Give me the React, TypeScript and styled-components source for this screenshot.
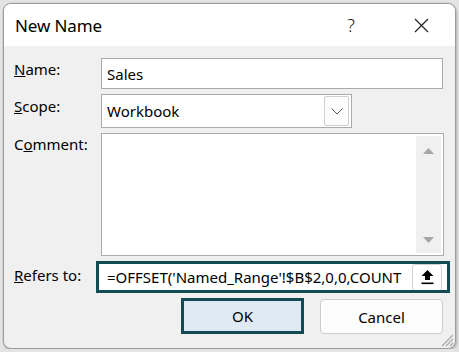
import React from "react";
import styled, { createGlobalStyle } from "styled-components";

const Global = createGlobalStyle`
  html, body { margin: 0; padding: 0; background: #e4e4e4; }
  body { font-family: "Noto Sans", "Open Sans", "Liberation Sans", sans-serif; color: #000; }
  * { box-sizing: border-box; }
`;

const Dialog = styled.div`
  margin: 3px 0 0 3px;
  width: 453px;
  height: 346px;
  border: 1px solid #9c9c9c;
  border-radius: 8px;
  background: #f0f0f0;
  box-shadow: 0 0 0 1px rgba(0,0,0,0.06), 1px 2px 3px rgba(0,0,0,0.18);
  overflow: hidden;
  display: flex;
  flex-direction: column;
  position: relative;
`;

const TitleBar = styled.div`
  height: 42px;
  background: #fff;
  display: flex;
  align-items: center;
  padding: 0 0 0 11px;
`;

const Title = styled.div`
  flex: 1;
  font-size: 17px;
  letter-spacing: -0.1px;
  padding-top: 1px;
`;

const TitleButton = styled.div<{ $w: number }>`
  width: ${p => p.$w}px;
  height: 42px;
  display: flex;
  align-items: center;
  justify-content: center;
  font-size: 18px;
  font-weight: 300;
  color: #222;
`;

const Body = styled.div`
  flex: 1;
  padding: 12px 10px 0 10px;
  display: grid;
  grid-template-columns: 87px 1fr;
  grid-template-rows: 31px 34px 123px 32px;
  row-gap: 5px;
`;

const Label = styled.div<{ $pt: number }>`
  font-size: 15px;
  line-height: 20px;
  padding-top: ${p => p.$pt}px;
  white-space: nowrap;
`;

const TextBox = styled.div<{ $w?: number }>`
  width: ${p => (p.$w ? `${p.$w}px` : "auto")};
  height: 100%;
  background: #fff;
  border: 1px solid #ababab;
  display: flex;
  align-items: center;
  padding-left: 5px;
  font-size: 15px;
  position: relative;
`;

const SelectBox = styled(TextBox)`
  padding-right: 2px;
  justify-content: space-between;
`;

const DropButton = styled.div`
  width: 25px;
  height: 30px;
  border: 1px solid #cfcfcf;
  border-radius: 2px;
  background: #fcfcfc;
  display: flex;
  align-items: center;
  justify-content: center;
`;

const CommentBox = styled.div`
  background: #fff;
  border: 1px solid #ababab;
  width: 343px;
  height: 123px;
  display: flex;
  justify-content: flex-end;
  padding: 2px 2px 2px 0;
`;

const ScrollBar = styled.div`
  width: 25px;
  height: 100%;
  background: #f0f0f0;
  display: flex;
  flex-direction: column;
  justify-content: space-between;
  align-items: center;
  padding: 12px 0 10px;
`;

const RefersBox = styled.div`
  margin-left: -5px;
  width: 354px;
  height: 32px;
  border: 3px solid #124b53;
  background: #fff;
  display: flex;
  align-items: center;
  padding: 0 5px 0 8px;
  font-size: 15px;
  overflow: hidden;
`;

const RefText = styled.div`
  flex: 1;
  white-space: nowrap;
  overflow: hidden;
`;

const UploadButton = styled.div`
  width: 30px;
  height: 27px;
  flex: none;
  border: 1px solid #d0d0d0;
  border-radius: 3px;
  background: #fff;
  display: flex;
  align-items: center;
  justify-content: center;
`;

const ButtonRow = styled.div`
  display: flex;
  justify-content: flex-end;
  gap: 16px;
  padding: 4px 12px 0 0;
  height: 54px;
`;

const Button = styled.div<{ $primary?: boolean }>`
  width: 123px;
  height: ${p => (p.$primary ? 36 : 35)}px;
  margin-top: ${p => (p.$primary ? 0 : 1)}px;
  border: ${p => (p.$primary ? "3px solid #124b53" : "1px solid #cccccc")};
  border-radius: ${p => (p.$primary ? 0 : 4)}px;
  background: ${p => (p.$primary ? "#dfeaf5" : "#fcfcfc")};
  display: flex;
  align-items: center;
  justify-content: center;
  font-size: 15px;
`;

const Grip = styled.svg`
  position: absolute;
  right: 1px;
  bottom: 1px;
`;

export default function App() {
  return (
    <>
      <Global />
      <Dialog>
        <TitleBar>
          <Title>New Name</Title>
          <TitleButton $w={46} style={{ marginRight: 24 }}>?</TitleButton>
          <TitleButton $w={46} style={{ marginRight: 11 }}>
            <svg width="15" height="15" viewBox="0 0 15 15">
              <path d="M1 1L14 14M14 1L1 14" stroke="#222" strokeWidth="1.2" />
            </svg>
          </TitleButton>
        </TitleBar>
        <Body>
          <Label $pt={1}><u>N</u>ame:</Label>
          <TextBox $w={342}>Sales</TextBox>

          <Label $pt={2}><u>S</u>cope:</Label>
          <SelectBox $w={251}>
            Workbook
            <DropButton>
              <svg width="12" height="7" viewBox="0 0 12 7">
                <path d="M0.5 0.5L6 6L11.5 0.5" fill="none" stroke="#555" strokeWidth="1" />
              </svg>
            </DropButton>
          </SelectBox>

          <Label $pt={1}>C<u>o</u>mment:</Label>
          <CommentBox>
            <ScrollBar>
              <svg width="11" height="6" viewBox="0 0 11 6"><path d="M5.5 0L11 6H0Z" fill="#a6a6a6" /></svg>
              <svg width="11" height="6" viewBox="0 0 11 6"><path d="M0 0H11L5.5 6Z" fill="#a6a6a6" /></svg>
            </ScrollBar>
          </CommentBox>

          <Label $pt={4}><u>R</u>efers to:</Label>
          <RefersBox>
            <RefText>=OFFSET('Named_Range'!$B$2,0,0,COUNT</RefText>
            <UploadButton>
              <svg width="13" height="16" viewBox="0 0 13 16">
                <path d="M6.5 1L12.5 7H9V11H4V7H0.5Z" fill="#000" />
                <rect x="0.5" y="13.5" width="12" height="1.6" fill="#000" />
              </svg>
            </UploadButton>
          </RefersBox>
        </Body>
        <ButtonRow>
          <Button $primary>OK</Button>
          <Button>Cancel</Button>
        </ButtonRow>
        <Grip width="14" height="14" viewBox="0 0 14 14">
          <path d="M13 2L2 13M13 6L6 13M13 10L10 13" stroke="#b0b0b0" strokeWidth="1.5" />
        </Grip>
      </Dialog>
    </>
  );
}
